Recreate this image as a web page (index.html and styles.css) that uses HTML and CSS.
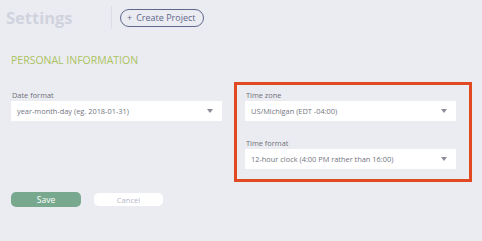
FILE: index.html
```html
<!DOCTYPE html>
<html>
<head>
<meta charset="utf-8">
<link rel="stylesheet" href="styles.css">
</head>
<body>
<header class="topbar">
  <h1 class="title">Settings</h1>
  <div class="divider"></div>
  <button class="create-btn"><span class="plus">+</span> Create Project</button>
</header>
<main class="content">
  <h2 class="section-title">PERSONAL INFORMATION</h2>
  <div class="columns">
    <div class="col-left">
      <div class="field">
        <label class="label">Date format</label>
        <div class="select"><span>year-month-day (eg. 2018-01-31)</span><span class="caret"></span></div>
      </div>
    </div>
    <div class="highlight">
      <div class="field">
        <label class="label">Time zone</label>
        <div class="select"><span>US/Michigan (EDT -04:00)</span><span class="caret"></span></div>
      </div>
      <div class="field">
        <label class="label">Time format</label>
        <div class="select"><span>12-hour clock (4:00 PM rather than 16:00)</span><span class="caret"></span></div>
      </div>
    </div>
  </div>
  <div class="actions">
    <button class="btn-save">Save</button>
    <button class="btn-cancel">Cancel</button>
  </div>
</main>
</body>
</html>
```

FILE: styles.css
```css
* { box-sizing: border-box; }
html, body { margin: 0; padding: 0; }
body {
  width: 482px;
  height: 241px;
  overflow: hidden;
  background: #ebecf2;
  font-family: "Open Sans", sans-serif;
}
.topbar {
  display: flex;
  align-items: center;
  height: 35px;
  padding-left: 6px;
}
.title {
  margin: 0;
  font-size: 16.5px;
  font-weight: 700;
  color: #d0d3de;
  width: 105px;
}
.divider {
  width: 1px;
  height: 23px;
  background: #dcdee6;
  margin-right: 8px;
}
.create-btn {
  height: 18px;
  padding: 0 7px 0 6px;
  border: 1.5px solid #5f678b;
  border-radius: 10px;
  background: transparent;
  color: #5f678b;
  font-family: inherit;
  font-size: 9px;
  line-height: 14px;
  display: flex;
  align-items: center;
}
.plus { margin-right: 4px; font-size: 9px; }
.content { padding: 0 10px 0 11px; }
.section-title {
  margin: 18px 0 0 0;
  font-size: 10.5px;
  font-weight: 400;
  color: #abc360;
  line-height: 14px;
}
.columns {
  display: flex;
  align-items: flex-start;
  margin-top: 15px;
  gap: 12px;
}
.col-left { width: 211px; padding-top: 7px; }
.highlight {
  width: 238px;
  border: 3px solid #e14a20;
  padding: 4px 13px 10px 8px;
  display: flex;
  flex-direction: column;
  gap: 16px;
}
.label {
  display: block;
  font-size: 7.4px;
  color: #6f7179;
  line-height: 12px;
  padding-left: 1px;
}
.select {
  height: 20px;
  background: #fff;
  display: flex;
  align-items: center;
  justify-content: space-between;
  padding: 0 9px 0 6px;
  font-size: 7.4px;
  color: #74767f;
}
.caret {
  width: 0; height: 0;
  border-left: 3.5px solid transparent;
  border-right: 3.5px solid transparent;
  border-top: 4px solid #8b8d96;
}
.actions {
  display: flex;
  gap: 13px;
  margin-top: 10px;
  align-items: center;
}
.btn-save {
  width: 70px;
  height: 15px;
  border: none;
  border-radius: 5px;
  background: #78a98e;
  color: #fff;
  font-family: inherit;
  font-size: 8.5px;
  padding: 0;
}
.btn-cancel {
  width: 69px;
  height: 13px;
  border: none;
  border-radius: 5px;
  background: #fff;
  color: #b4b7ca;
  font-family: inherit;
  font-size: 7.6px;
  padding: 0;
}
```
